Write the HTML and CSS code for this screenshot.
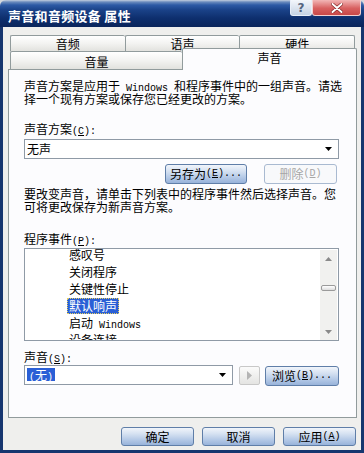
FILE: index.html
```html
<!DOCTYPE html>
<html lang="zh-CN">
<head>
<meta charset="utf-8">
<title>声音和音频设备 属性</title>
<link rel="stylesheet" href="styles.css">
</head>
<body>
<div class="window">
  <div class="titlebar">
    <span class="title">声音和音频设备 属性</span>
    <div class="caption-btns">
      <span class="cap help">?</span>
      <span class="cap close"><svg width="12" height="10" viewBox="0 0 12 10"><path d="M1.5 1 L10.5 9 M10.5 1 L1.5 9" stroke="#7a2020" stroke-width="3.2" stroke-linecap="round"/><path d="M1.5 1 L10.5 9 M10.5 1 L1.5 9" stroke="#ffffff" stroke-width="2" stroke-linecap="round"/></svg></span>
    </div>
  </div>
  <div class="client">
    <div class="tabrow back">
      <div class="tab">音频</div>
      <div class="tab">语声</div>
      <div class="tab last">硬件</div>
    </div>
    <div class="tabrow front">
      <div class="tab vol">音量</div>
      <div class="tab active">声音</div>
    </div>
    <div class="panel">
      <p class="desc">声音方案是应用于<span class="lat"> Windows </span>和程序事件中的一组声音。请选<br>择一个现有方案或保存您已经更改的方案。</p>
      <div class="label label-scheme">声音方案<span class="lat">(<u>C</u>):</span></div>
      <div class="combo scheme">
        <span class="combo-text">无声</span>
        <svg class="drop" width="7" height="4" viewBox="0 0 7 4"><path d="M0 0h7L3.5 4z" fill="#000"/></svg>
      </div>
      <div class="btnrow">
        <button class="btn saveas">另存为<span class="lat">(<u>E</u>)...</span></button>
        <button class="btn disabled del">删除<span class="lat">(<u>D</u>)</span></button>
      </div>
      <p class="desc desc2">要改变声音，请单击下列表中的程序事件然后选择声音。您<br>可将更改保存为新声音方案。</p>
      <div class="label label-events">程序事件<span class="lat">(<u>P</u>):</span></div>
      <div class="listbox">
        <ul class="items">
          <li><span class="item-text">感叹号</span></li>
          <li><span class="item-text">关闭程序</span></li>
          <li><span class="item-text">关键性停止</span></li>
          <li><span class="item-text selected">默认响声</span></li>
          <li><span class="item-text">启动<span class="lat"> Windows</span></span></li>
          <li><span class="item-text">设备连接</span></li>
        </ul>
        <div class="vscroll">
          <div class="sbtn"><svg width="7" height="4" viewBox="0 0 7 4"><path d="M0 4h7L3.5 0z" fill="#8a8a8a"/></svg></div>
          <div class="track"><div class="thumb"></div></div>
          <div class="sbtn"><svg width="7" height="4" viewBox="0 0 7 4"><path d="M0 0h7L3.5 4z" fill="#8a8a8a"/></svg></div>
        </div>
      </div>
      <div class="label label-sound">声音<span class="lat">(<u>S</u>):</span></div>
      <div class="soundrow">
        <div class="combo sound">
          <span class="combo-text"><span class="hl"><span class="lat">(</span>无<span class="lat">)</span></span></span>
          <svg class="drop" width="7" height="4" viewBox="0 0 7 4"><path d="M0 0h7L3.5 4z" fill="#000"/></svg>
        </div>
        <button class="play"><svg width="5" height="9" viewBox="0 0 5 9"><path d="M0 0L5 4.5L0 9z" fill="#b4b4b4"/></svg></button>
        <button class="btn browse">浏览<span class="lat">(<u>B</u>)...</span></button>
      </div>
    </div>
    <div class="footer">
      <button class="btn fbtn">确定</button>
      <button class="btn fbtn">取消</button>
      <button class="btn fbtn">应用<span class="lat">(<u>A</u>)</span></button>
    </div>
  </div>
</div>
</body>
</html>
```

FILE: styles.css
```css
* { box-sizing: border-box; }
html, body { margin: 0; padding: 0; }
body {
  width: 364px;
  height: 453px;
  overflow: hidden;
  font-family: "Noto Sans CJK SC", sans-serif;
  font-size: 12px;
  color: #000;
  background: #d4d8de;
}
.lat {
  font-family: "Liberation Mono", monospace;
  font-size: 10px;
  line-height: 0;
}
.window {
  width: 364px;
  height: 453px;
  display: flex;
  flex-direction: column;
}
.titlebar {
  height: 27px;
  flex: none;
  display: flex;
  justify-content: space-between;
  align-items: flex-start;
  background: linear-gradient(180deg, #c4cfdf 0, #6a8bbd 2px, #2d5aa5 5px, #1a4288 10px, #0e2f6e 18px, #0a255b 27px);
  border-radius: 6px 6px 0 0;
}
.title {
  color: #fff;
  font-weight: bold;
  font-size: 13px;
  line-height: 15px;
  margin: 8px 0 0 8px;
  letter-spacing: 0.3px;
}
.caption-btns {
  display: flex;
  margin-right: 3px;
}
.cap {
  height: 16px;
  display: flex;
  align-items: center;
  justify-content: center;
  border: 1px solid #e8eef8;
  border-top: none;
  border-radius: 0 0 3px 3px;
}
.help {
  width: 22px;
  background: linear-gradient(180deg, #f4f7fb, #c5d2e4);
  color: #54647e;
  font-family: "DejaVu Sans", sans-serif;
  font-size: 12px;
  font-weight: bold;
  line-height: 14px;
}
.close {
  width: 49px;
  background: linear-gradient(180deg, #f2b6b6, #d86060 55%, #c84848);
  border-color: #f3d0d0;
}
.client {
  flex: 1;
  min-height: 0;
  border: 3px solid #16366f;
  border-top: none;
  padding: 8px 4px 0 5px;
  background: #efefed;
}
.tabrow { display: flex; }
.back {
  height: 16px;
  margin: 0 2px;
}
.tab {
  display: flex;
  align-items: center;
  justify-content: center;
  border: 1px solid #919b9c;
  border-bottom: none;
  border-right: none;
  background: linear-gradient(180deg, #ffffff, #f3f3f1 50%, #e2e2de);
  border-radius: 2px 2px 0 0;
  line-height: 14px;
}
.back .tab { flex: 1; }
.back .tab.last { border-right: 1px solid #919b9c; }
.front {
  height: 18px;
  margin-left: 2px;
  align-items: flex-start;
}
.vol {
  width: 172px;
  height: 18px;
  padding-top: 2px;
}
.active {
  width: 175px;
  height: 22px;
  margin-top: -3px;
  border-right: 1px solid #919b9c;
  background: #fcfcfe;
  position: relative;
  z-index: 1;
  padding-bottom: 3px;
}
.panel {
  height: 349px;
  border: 1px solid #919b9c;
  background: #fcfcfe;
  padding: 9px 17px 0 15px;
}
.desc {
  margin: 0;
  height: 26px;
  line-height: 13px;
  white-space: nowrap;
}
.desc2 { margin-top: 3px; }
.label {
  height: 13px;
  line-height: 13px;
  white-space: nowrap;
}
.label-scheme { margin-top: 17px; }
.label-events { margin-top: 19px; }
.label-sound { margin-top: 9px; }
.combo {
  height: 20px;
  border: 1px solid #8f9aa6;
  background: #fff;
  display: flex;
  align-items: center;
  justify-content: space-between;
  padding: 0 6px 0 2px;
}
.scheme { margin-top: 4px; }
.combo-text { line-height: 14px; }
.drop { flex: none; }
.btnrow {
  margin-top: 5px;
  height: 20px;
  display: flex;
  justify-content: flex-end;
  gap: 17px;
  padding-right: 2px;
}
.btn {
  height: 20px;
  padding: 0;
  font-family: "Noto Sans CJK SC", sans-serif;
  font-size: 12px;
  line-height: 14px;
  color: #000;
  border: 1px solid #5f7ea8;
  border-radius: 3px;
  background: linear-gradient(180deg, #f1f5fb 0, #d5e1f1 35%, #b3c8e6 70%, #98b3da 100%);
  display: flex;
  align-items: center;
  justify-content: center;
}
.saveas { width: 82px; }
.del { width: 73px; }
.btn.disabled {
  color: #a6a6a6;
  border-color: #a9bad1;
  background: #f8f9fb;
}
.listbox {
  margin-top: 3px;
  height: 93px;
  border: 1px solid #8f9aa6;
  background: #fff;
  display: flex;
  overflow: hidden;
}
.items {
  list-style: none;
  margin: -2px 0 0 0;
  padding: 0 0 0 42px;
  flex: 1;
}
.items li {
  height: 17px;
  line-height: 16px;
  white-space: nowrap;
}
.item-text {
  display: inline-block;
  height: 16px;
  padding: 0 2px;
}
.item-text.selected {
  background: #2a5fd6;
  color: #fff;
  outline: 1px dotted #e8d060;
  outline-offset: -1px;
}
.vscroll {
  width: 17px;
  flex: none;
  margin: 1px 1px 0 0;
  background: #f1f1ef;
  display: flex;
  flex-direction: column;
}
.sbtn {
  height: 17px;
  flex: none;
  display: flex;
  align-items: center;
  justify-content: center;
}
.track {
  flex: 1;
  padding-top: 18px;
  display: flex;
  justify-content: center;
}
.thumb {
  width: 15px;
  height: 6px;
  border: 1px solid #9a9a9a;
  border-radius: 2px;
  background: linear-gradient(180deg, #ffffff, #dcdcdc);
}
.soundrow {
  margin-top: 2px;
  height: 21px;
  display: flex;
  align-items: flex-start;
}
.sound { width: 209px; }
.hl {
  display: inline-block;
  background: #2a5fd6;
  color: #fff;
  padding: 0 2px;
  height: 13px;
  line-height: 13px;
}
.play {
  width: 21px;
  height: 19px;
  margin: 1px 0 0 6px;
  padding: 0;
  border: 1px solid #c8c8c8;
  border-radius: 2px;
  background: linear-gradient(180deg, #fbfbfb, #e4e4e2);
  display: flex;
  align-items: center;
  justify-content: center;
}
.browse {
  width: 74px;
  margin: 1px 0 0 5px;
}
.footer {
  margin-top: 9px;
  display: flex;
  justify-content: flex-end;
  gap: 8px;
  padding-right: 1px;
}
.fbtn {
  width: 73px;
  height: 19px;
}
```
